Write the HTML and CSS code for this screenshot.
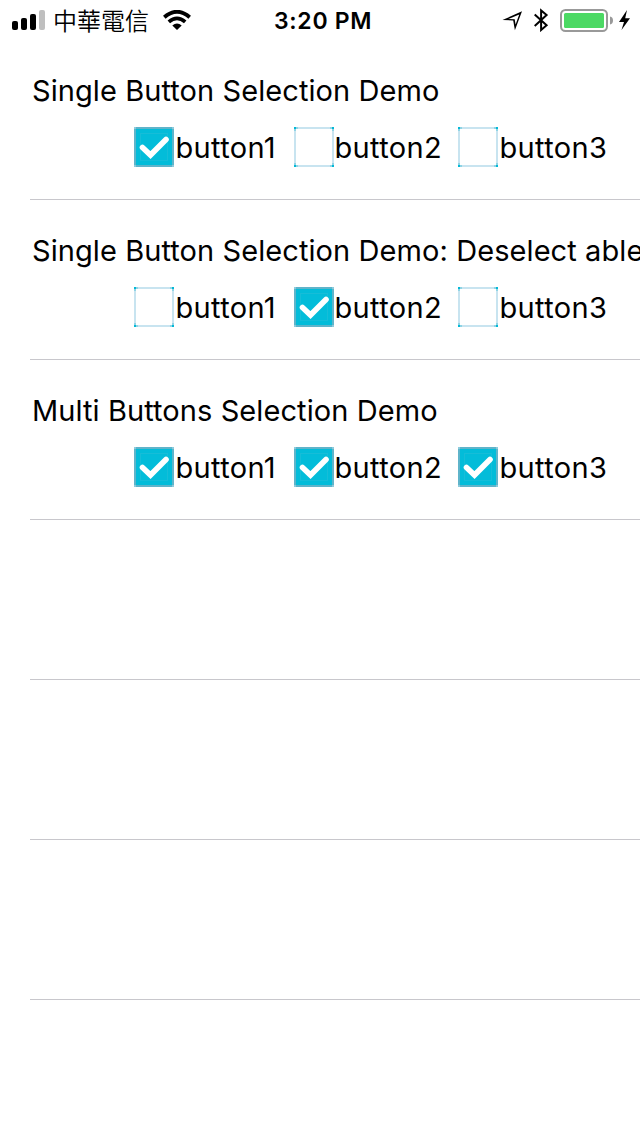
FILE: index.html
```html
<!DOCTYPE html>
<html lang="en">
<head>
<meta charset="utf-8">
<title>Button Selection Demo</title>
<link rel="stylesheet" href="styles.css">
</head>
<body>
<svg class="defs" width="0" height="0">
  <defs>
    <symbol id="on" viewBox="0 0 40 40">
      <rect width="40" height="40" fill="#5fb4ca"/>
      <rect x="2" y="2" width="36" height="36" fill="#03bcd9"/>
      <rect x="6.500" y="6.500" width="27" height="27" fill="none" stroke="#16bdd8"/>
      <path d="M8.500 20.500 16.500 28 32 12.500" fill="none" stroke="#fff" stroke-width="5.600" stroke-linecap="round"/>
      <path d="M0 0h2v2h-2zM38 0h2v2h-2zM0 38h2v2h-2zM38 38h2v2h-2z" fill="#8ccbdc"/>
    </symbol>
    <symbol id="off" viewBox="0 0 40 40">
      <rect x="1" y="1" width="38" height="38" fill="#fff" stroke="#c8e4f0" stroke-width="2"/>
      <path d="M2 1h2M1 2v2M36 1h2M39 2v2M2 39h2M1 36v2M36 39h2M39 36v2" stroke="#8fd4e5" stroke-width="2"/>
      <path d="M0 0h2v2h-2zM38 0h2v2h-2zM0 38h2v2h-2zM38 38h2v2h-2z" fill="#03b8d6"/>
    </symbol>
  </defs>
</svg>
<header class="status">
  <div class="status-left">
    <svg class="signal" width="33" height="20" viewBox="0 0 33 20">
      <rect x="0" y="11" width="6" height="9" rx="2"/>
      <rect x="9" y="8" width="6" height="12" rx="2"/>
      <rect x="18" y="4" width="6" height="16" rx="2"/>
      <rect x="27" y="0" width="6" height="20" rx="2" fill="#bfbfbf"/>
    </svg>
    <span class="carrier">中華電信</span>
    <svg width="28" height="20" viewBox="0 0 28 20">
      <g fill="none" stroke="#000">
        <path d="M1.300 7.200Q14 -3.600 26.700 7.200" stroke-width="3.900"/>
        <path d="M5.800 11.900Q14 4.900 22.200 11.900" stroke-width="3.800"/>
      </g>
      <path d="M9.300 15.500Q14 11.600 18.700 15.500L14 20Z"/>
    </svg>
  </div>
  <div class="time">3:20 PM</div>
  <svg class="status-right" width="130" height="24" viewBox="0 0 130 24">
    <path fill-rule="evenodd" d="M2.500 12 22 3.300 14.900 22.300 13.200 12.400ZM8.500 11 14.700 11.200 15.600 16.600 19.200 6.400Z"/>
    <path d="M34.700 6.500 46.600 17.300 41.100 22V2.400L46.600 7.100 34.700 17.900" fill="none" stroke="#000" stroke-width="2"/>
    <rect x="61" y="2" width="46" height="21" rx="4.500" fill="#fff" stroke="#999" stroke-width="2"/>
    <rect x="64" y="5" width="40" height="15" rx="1.500" fill="#4cd964"/>
    <path d="M110 8.500Q113 9 113 12.500T110 16.500Z" fill="#999"/>
    <path d="M127 2 119 14H124L121.500 22 130 10.200H125.200Z"/>
  </svg>
</header>
<main class="list">
  <section class="row">
    <h2 class="title">Single Button Selection Demo</h2>
    <div class="options">
      <label class="option"><svg class="box"><use href="#on"/></svg><span>button1</span></label>
      <label class="option wide"><svg class="box"><use href="#off"/></svg><span>button2</span></label>
      <label class="option"><svg class="box"><use href="#off"/></svg><span>button3</span></label>
    </div>
  </section>
  <section class="row">
    <h2 class="title">Single Button Selection Demo: Deselect able</h2>
    <div class="options">
      <label class="option"><svg class="box"><use href="#off"/></svg><span>button1</span></label>
      <label class="option wide"><svg class="box"><use href="#on"/></svg><span>button2</span></label>
      <label class="option"><svg class="box"><use href="#off"/></svg><span>button3</span></label>
    </div>
  </section>
  <section class="row">
    <h2 class="title">Multi Buttons Selection Demo</h2>
    <div class="options">
      <label class="option"><svg class="box"><use href="#on"/></svg><span>button1</span></label>
      <label class="option wide"><svg class="box"><use href="#on"/></svg><span>button2</span></label>
      <label class="option"><svg class="box"><use href="#on"/></svg><span>button3</span></label>
    </div>
  </section>
  <section class="row"></section>
  <section class="row"></section>
  <section class="row"></section>
</main>
</body>
</html>
```
FILE: styles.css
```css
* { box-sizing: border-box; }
body {
  margin: 0;
  height: 1136px;
  overflow: hidden;
  background: #fff;
  color: #000;
  font-family: Inter, "Noto Sans CJK TC", sans-serif;
}
svg { display: block; flex: none; }
.defs { position: absolute; }
.status {
  display: grid;
  grid-template: 40px / 262px 1fr 140px;
  height: 40px;
  align-items: center;
}
.status-left { display: flex; align-items: center; padding-left: 12px; }
.carrier {
  margin: 0 14px 0 8px;
  padding-bottom: 1px;
  font: 350 24px/38px "Noto Sans CJK TC", sans-serif;
}
.time {
  padding: 2px 0 0 12px;
  font-size: 23px;
  font-weight: 600;
  line-height: 38px;
  letter-spacing: 0.7px;
  white-space: nowrap;
}
.row {
  height: 160px;
  margin-left: 30px;
  padding-top: 32px;
  border-bottom: 1px solid #c8c7cc;
}
.title {
  margin: 0 0 0 2px;
  font-size: 29px;
  font-weight: 400;
  line-height: 38px;
  letter-spacing: 0.08px;
  white-space: nowrap;
}
.options { display: flex; margin-top: 17px; padding-left: 104px; }
.option {
  display: flex;
  flex: none;
  gap: 1.5px;
  width: 160px;
  font-size: 29px;
  line-height: 41px;
  letter-spacing: 0.35px;
}
.option.wide { gap: 0.5px; width: 164px; }
.box { width: 40px; height: 40px; }
```
